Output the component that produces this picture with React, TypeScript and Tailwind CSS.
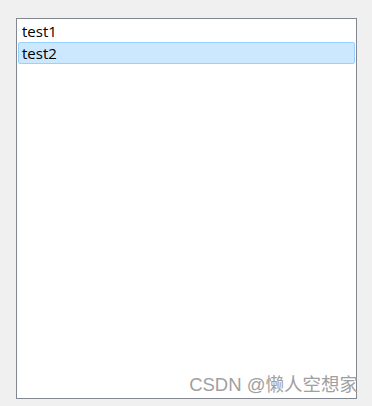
import React from "react";

const items = ["test1", "test2"];

export default function App() {
  const selected = 1;
  return (
    <div className="relative h-[406px] w-[372px] bg-[#f0f0f0] pt-[18px] pl-[16px]">
      <div
        className="flex h-[381px] w-[341px] flex-col border border-[#828790] bg-white p-[1px]"
        style={{ fontFamily: '"Open Sans", "Noto Sans", sans-serif' }}
      >
        {items.map((item, i) => (
          <div
            key={item}
            className={
              i === selected
                ? "flex h-[22px] items-center rounded-[2px] border border-[#99d1ff] bg-[#cce8ff] pl-[3px] text-[15px] text-black"
                : "flex h-[22px] items-center border border-transparent pl-[3px] text-[15px] text-black"
            }
          >
            {item}
          </div>
        ))}
      </div>
      <div
        className="absolute right-[14px] top-[376px] text-[18.5px] leading-none text-[#a0a0a0]"
        style={{ fontFamily: '"Liberation Sans", "Noto Sans CJK SC", sans-serif' }}
      >
        CSDN @懒人空想家
      </div>
    </div>
  );
}
